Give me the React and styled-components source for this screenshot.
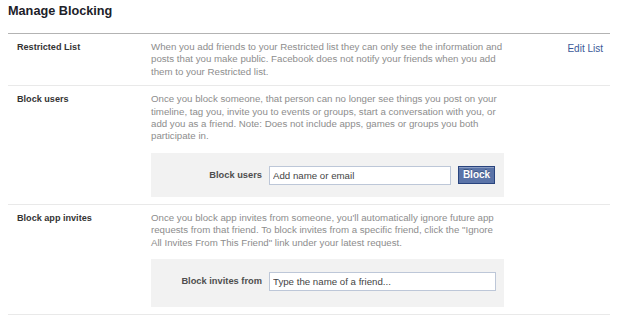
import styled, { createGlobalStyle } from 'styled-components';

const GlobalStyle = createGlobalStyle`
  body {
    margin: 0;
    background: #fff;
    font-family: "Liberation Sans", Arial, sans-serif;
  }
`;

const Page = styled.div`
  width: 602px;
  margin-left: 8px;
`;

const Title = styled.h2`
  margin: 0;
  padding: 3px 0 14px;
  font-size: 12.7px;
  line-height: 16px;
  font-weight: 700;
  color: #1d2129;
  border-bottom: 1px solid #b3b3b3;
`;

const Row = styled.div`
  display: grid;
  grid-template-columns: 143px 353px 1fr;
  padding: 7px 0 7px;
  border-bottom: 1px solid #e9e9e9;
  line-height: 12.4px;
`;

const Label = styled.div`
  padding-left: 9px;
  font-size: 9.1px;
  font-weight: 700;
  color: #333;
`;

const Body = styled.div`
  display: flex;
  flex-direction: column;
  gap: 10px;
`;

const Desc = styled.div`
  font-size: 9.7px;
  color: #8d8d8d;
`;

const Action = styled.div`
  text-align: right;
  padding-right: 7px;
`;

const EditLink = styled.a`
  font-size: 10px;
  color: #3b5998;
  text-decoration: none;
  cursor: pointer;
`;

const FormBox = styled.div`
  display: grid;
  grid-template-columns: 111px auto auto;
  justify-content: start;
  align-items: start;
  column-gap: 7px;
  padding: 13px 0 ${p => p.$padBottom}px;
  background: #f2f2f2;
`;

const BoxLabel = styled.label`
  align-self: center;
  text-align: right;
  font-size: 9.3px;
  font-weight: 700;
  color: #4e4e4e;
`;

const Input = styled.input`
  box-sizing: border-box;
  width: ${p => p.$w}px;
  height: 19px;
  padding: 0 3px;
  border: 1px solid #bdc7d8;
  background: #fff;
  font-family: "Liberation Sans", Arial, sans-serif;
  font-size: 9.7px;
  color: #333;
  outline: none;

  &::placeholder {
    color: #444;
  }
`;

const Button = styled.button`
  box-sizing: border-box;
  height: 18px;
  width: 37px;
  padding: 0;
  border: 1px solid #29447e;
  box-shadow: inset 0 1px 0 #8a9cc2;
  background: #5b74a8;
  color: #fff;
  font-family: "Liberation Sans", Arial, sans-serif;
  font-size: 10px;
  font-weight: 700;
  text-shadow: 0 -1px 0 #3b5580;
  cursor: pointer;
`;

export default function App() {
  return (
    <>
      <GlobalStyle />
      <Page>
        <Title>Manage Blocking</Title>

        <Row>
          <Label>Restricted List</Label>
          <Desc>
            When you add friends to your Restricted list they can only see the information and
            posts that you make public. Facebook does not notify your friends when you add
            them to your Restricted list.
          </Desc>
          <Action>
            <EditLink>Edit List</EditLink>
          </Action>
        </Row>

        <Row>
          <Label>Block users</Label>
          <Body>
            <Desc>
              Once you block someone, that person can no longer see things you post on your
              timeline, tag you, invite you to events or groups, start a conversation with you, or
              add you as a friend. Note: Does not include apps, games or groups you both
              participate in.
            </Desc>
            <FormBox $padBottom={12}>
              <BoxLabel>Block users</BoxLabel>
              <Input $w={182} placeholder="Add name or email" />
              <Button>Block</Button>
            </FormBox>
          </Body>
          <Action />
        </Row>

        <Row>
          <Label>Block app invites</Label>
          <Body>
            <Desc>
              Once you block app invites from someone, you'll automatically ignore future app
              requests from that friend. To block invites from a specific friend, click the "Ignore
              All Invites From This Friend" link under your latest request.
            </Desc>
            <FormBox $padBottom={16}>
              <BoxLabel>Block invites from</BoxLabel>
              <Input $w={227} placeholder="Type the name of a friend..." />
            </FormBox>
          </Body>
          <Action />
        </Row>
      </Page>
    </>
  );
}
